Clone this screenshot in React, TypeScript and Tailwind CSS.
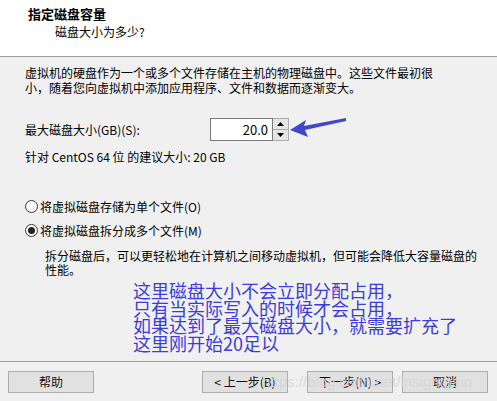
import React from "react";

const font = { fontFamily: '"Noto Sans CJK SC", "Noto Sans", sans-serif' };

function Btn({ children, className = "" }: { children: React.ReactNode; className?: string }) {
  return (
    <div
      className={`h-[22px] w-[86px] border border-[#adadad] bg-[#e1e1e1] flex items-center justify-center text-[12px] text-[#111] ${className}`}
    >
      {children}
    </div>
  );
}

export default function App() {
  return (
    <div className="relative w-[497px] h-[401px] bg-[#f0f0f0] flex flex-col overflow-hidden" style={font}>
      {/* header */}
      <div className="h-[57px] bg-white border-b border-[#a0a0a0] shrink-0">
        <div className="pl-[28px] pt-[6px] text-[13px] leading-[15px] font-bold text-black">指定磁盘容量</div>
        <div className="pl-[55px] pt-[3px] text-[12px] leading-[15px] text-black">磁盘大小为多少?</div>
      </div>

      {/* body */}
      <div className="flex-1 pl-[25px] text-[12px] text-black">
        <div className="pt-[8px] leading-[15px] w-[420px]">
          虚拟机的硬盘作为一个或多个文件存储在主机的物理磁盘中。这些文件最初很
          <br />
          小，随着您向虚拟机中添加应用程序、文件和数据而逐渐变大。
        </div>

        <div className="mt-[23px] h-[23px] flex items-center">
          <div className="w-[185px] leading-[15px]">最大磁盘大小(GB)(S):</div>
          <div className="h-[23px] w-[63px] border border-[#7a7a7a] bg-white flex items-center justify-end pr-[4px] text-[13px]">
            20.0
          </div>
          <div className="h-[23px] w-[16px] flex flex-col border border-[#adadad] border-l-0 bg-[#f0f0f0]">
            <div className="flex-1 flex items-center justify-center border-b border-[#adadad] bg-[#e5e5e5]">
              <svg width="7" height="4" viewBox="0 0 7 4"><path d="M3.5 0L7 4H0z" fill="#000" /></svg>
            </div>
            <div className="flex-1 flex items-center justify-center bg-[#e5e5e5]">
              <svg width="7" height="4" viewBox="0 0 7 4"><path d="M0 0H7L3.5 4z" fill="#000" /></svg>
            </div>
          </div>
        </div>

        <div className="mt-[8px] leading-[15px]">针对 CentOS 64 位 的建议大小: 20 GB</div>

        <div className="mt-[34px] h-[16px] flex items-center">
          <div className="w-[13px] h-[13px] rounded-full border border-[#333] bg-white" />
          <div className="ml-[2px] leading-[15px]">将虚拟磁盘存储为单个文件(O)</div>
        </div>

        <div className="mt-[8px] h-[16px] flex items-center">
          <div className="w-[13px] h-[13px] rounded-full border border-[#333] bg-white flex items-center justify-center">
            <div className="w-[7px] h-[7px] rounded-full bg-[#222]" />
          </div>
          <div className="ml-[2px] leading-[15px]">将虚拟磁盘拆分成多个文件(M)</div>
        </div>

        <div className="mt-[11px] pl-[20px] leading-[14px]">
          拆分磁盘后，可以更轻松地在计算机之间移动虚拟机，但可能会降低大容量磁盘的
          <br />
          性能。
        </div>

        <div className="mt-[5px] pl-[108px] text-[18px] leading-[17.6px] text-[#3c3cd6]">
          这里磁盘大小不会立即分配占用，
          <br />
          只有当实际写入的时候才会占用，
          <br />
          如果达到了最大磁盘大小，就需要扩充了
          <br />
          这里刚开始20足以
        </div>
      </div>

      {/* footer */}
      <div className="h-[40px] border-t border-[#a0a0a0] shrink-0 flex items-start pt-[9px] pl-[8px]">
        <Btn>帮助</Btn>
        <div className="ml-auto flex pr-[9px]">
          <Btn className="w-[76px]">&lt; 上一步(B)</Btn>
          <Btn className="ml-[19px]">下一步(N) &gt;</Btn>
          <Btn className="ml-[9px]">取消</Btn>
        </div>
      </div>

      {/* watermark */}
      <div
        className="absolute left-[262px] top-[372px] text-[15px] leading-[20px] text-[#d4d4d4] opacity-80 whitespace-nowrap"
        style={{ fontFamily: '"Liberation Sans", Arial, sans-serif' }}
      >
        https://blog.csdn.net/insightgain
      </div>

      {/* arrow */}
      <svg className="absolute left-[288px] top-[110px]" width="60" height="32" viewBox="0 0 60 32">
        <path d="M2 20 L18 10 L16 16 L58 8 L58 11 L17 20 L20 27 Z" fill="#3f48cc" />
      </svg>
    </div>
  );
}
